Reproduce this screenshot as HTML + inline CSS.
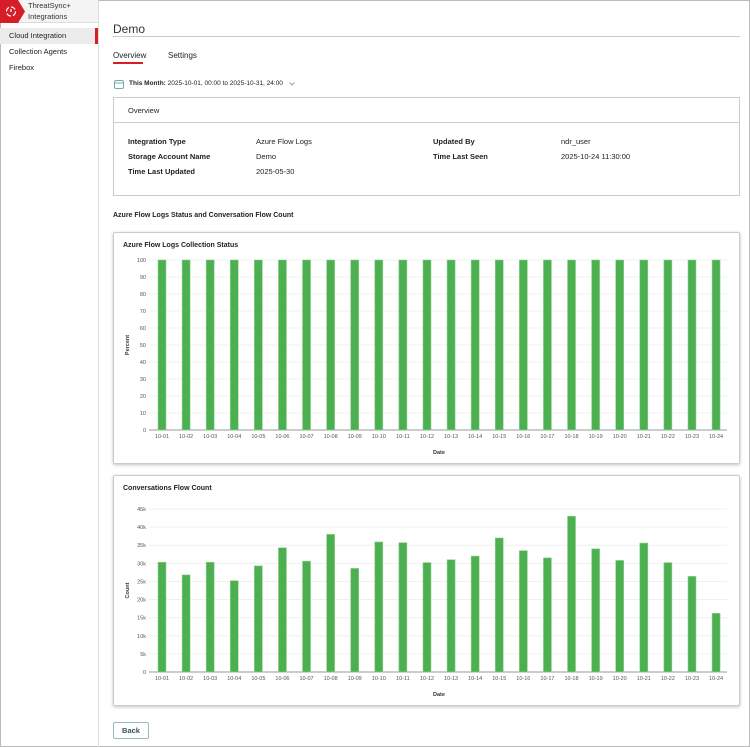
<!DOCTYPE html>
<html><head><meta charset="utf-8"><style>
*{margin:0;padding:0;box-sizing:border-box}
body{width:750px;height:747px;background:#fff;font-family:"Liberation Sans",sans-serif;color:#222;position:relative;overflow:hidden}
.a{position:absolute;white-space:nowrap}
.f8{font-size:7.5px}
.b{font-weight:bold}
</style></head><body>
<div class="a" style="left:0;top:0;width:750px;height:747px;border:1px solid #bbb"></div>
<div class="a" style="left:0;top:0;width:99px;height:747px;border-right:1px solid #ddd"></div>
<div class="a" style="left:0;top:0;width:98px;height:23px;background:#f4f4f4;border-bottom:1px solid #ddd"></div>
<svg class="a" style="left:0;top:0" width="26" height="23"><polygon points="0,0 18,0 25,11.5 18,23 0,23" fill="#d71e28"/><circle cx="11" cy="11.5" r="4.5" fill="none" stroke="#fff" stroke-width="1.2" stroke-dasharray="5 2"/><rect x="10.4" y="9" width="1.2" height="3" fill="#fff"/></svg>
<div class="a" style="left:28px;top:1px;font-size:7.5px;color:#333">ThreatSync+</div>
<div class="a" style="left:28px;top:12px;font-size:7.5px;color:#333">Integrations</div>
<div class="a" style="left:0;top:28px;width:98px;height:16px;background:#ececec"></div>
<div class="a" style="left:95px;top:28px;width:3px;height:16px;background:#d71e28"></div>
<div class="a" style="left:9px;top:31px;font-size:7.5px">Cloud Integration</div>
<div class="a" style="left:9px;top:47px;font-size:7.5px">Collection Agents</div>
<div class="a" style="left:9px;top:63px;font-size:7.5px">Firebox</div>

<div class="a" style="left:113px;top:22px;font-size:12px;color:#333">Demo</div>
<div class="a" style="left:113px;top:36px;width:627px;height:1px;background:#ccc"></div>
<div class="a" style="left:113px;top:51px;font-size:8px">Overview</div>
<div class="a" style="left:113px;top:62px;width:30px;height:2px;background:#d71e28"></div>
<div class="a" style="left:168px;top:51px;font-size:8px">Settings</div>
<svg class="a" style="left:114px;top:79px" width="10" height="10"><rect x="0.5" y="1.5" width="9" height="8" rx="1.5" fill="none" stroke="#7aa" stroke-width="1"/><line x1="0.5" y1="4" x2="9.5" y2="4" stroke="#7aa"/></svg>
<div class="a" style="left:129px;top:80px;font-size:6.5px"><b>This Month:</b> 2025-10-01, 00:00 to 2025-10-31, 24:00</div>
<svg class="a" style="left:289px;top:82px" width="6" height="4"><polyline points="0.5,0.5 3,3 5.5,0.5" fill="none" stroke="#7aa" stroke-width="0.9"/></svg>

<div class="a" style="left:113px;top:97px;width:627px;height:99px;border:1px solid #ccc"></div>
<div class="a" style="left:113px;top:122px;width:627px;height:1px;background:#ccc"></div>
<div class="a f8" style="left:128px;top:106px">Overview</div>
<div class="a f8 b" style="left:128px;top:137px">Integration Type</div>
<div class="a f8 b" style="left:128px;top:152px">Storage Account Name</div>
<div class="a f8 b" style="left:128px;top:167px">Time Last Updated</div>
<div class="a f8" style="left:256px;top:137px">Azure Flow Logs</div>
<div class="a f8" style="left:256px;top:152px">Demo</div>
<div class="a f8" style="left:256px;top:167px">2025-05-30</div>
<div class="a f8 b" style="left:433px;top:137px">Updated By</div>
<div class="a f8 b" style="left:433px;top:152px">Time Last Seen</div>
<div class="a f8" style="left:561px;top:137px">ndr_user</div>
<div class="a f8" style="left:561px;top:152px">2025-10-24 11:30:00</div>

<div class="a b" style="left:113px;top:212px;font-size:7px">Azure Flow Logs Status and Conversation Flow Count</div>

<div class="a" style="left:113px;top:232px;width:627px;height:232px;border:1px solid #ccc;box-shadow:0 1px 3px rgba(0,0,0,.25);border-radius:2px"></div>
<div class="a b" style="left:123px;top:242px;font-size:7px">Azure Flow Logs Collection Status</div>
<svg id="c1" class="a" style="left:113px;top:232px" width="627" height="232"></svg>

<div class="a" style="left:113px;top:475px;width:627px;height:231px;border:1px solid #ccc;box-shadow:0 1px 3px rgba(0,0,0,.25);border-radius:2px"></div>
<div class="a b" style="left:123px;top:485px;font-size:7px">Conversations Flow Count</div>
<svg id="c2" class="a" style="left:113px;top:475px" width="627" height="231"></svg>

<div class="a" style="left:113px;top:722px;width:36px;height:17px;border:1px solid #9bb;border-radius:2px;font-size:7.5px;font-weight:bold;color:#356;text-align:center;line-height:15px">Back</div>

<script>
function chart(id,top,bot,ticks,lbls,vals,max,ylab,xlabY){
 var s='',left=36,right=614;
 for(var i=0;i<ticks;i++){var y=bot-(bot-top)*i/(ticks-1);
  s+='<line x1="'+left+'" x2="'+right+'" y1="'+y+'" y2="'+y+'" stroke="#f0f0f0"/>';
  s+='<text x="'+(left-3)+'" y="'+(y+2)+'" font-size="5.5" fill="#555" text-anchor="end" font-family="Liberation Sans">'+lbls[i]+'</text>';}
 s+='<line x1="'+left+'" x2="'+right+'" y1="'+bot+'" y2="'+bot+'" stroke="#999"/>';
 for(var j=0;j<24;j++){var cx=49+j*24.09,h=(bot-top)*vals[j]/max;
  s+='<rect x="'+(cx-4)+'" y="'+(bot-h)+'" width="8" height="'+h+'" fill="#4caf50" stroke="#8fd18f" stroke-width="0.6"/>';
  s+='<text x="'+cx+'" y="'+(bot+8)+'" font-size="5.5" fill="#555" text-anchor="middle" font-family="Liberation Sans">10-'+(j<9?'0':'')+(j+1)+'</text>';}
 s+='<text x="'+(xlabY[0])+'" y="'+xlabY[1]+'" font-size="5.5" font-weight="bold" fill="#333" text-anchor="middle" font-family="Liberation Sans">Date</text>';
 var my=(top+bot)/2;
 s+='<text transform="translate(16,'+my+') rotate(-90)" font-size="5.5" font-weight="bold" fill="#333" text-anchor="middle" font-family="Liberation Sans">'+ylab+'</text>';
 document.getElementById(id).innerHTML=s;}
var v1=[];for(var i=0;i<24;i++)v1.push(100);
chart('c1',28,198,11,['0','10','20','30','40','50','60','70','80','90','100'],v1,100,'Percent',[326,222]);
chart('c2',34,197,10,['0','5k','10k','15k','20k','25k','30k','35k','40k','45k'],[30.3,26.8,30.3,25.2,29.3,34.3,30.6,38,28.6,35.9,35.7,30.2,31,32,37,33.5,31.5,43,34,30.8,35.6,30.2,26.4,16.2],45,'Count',[326,221]);
</script>
</body></html>
